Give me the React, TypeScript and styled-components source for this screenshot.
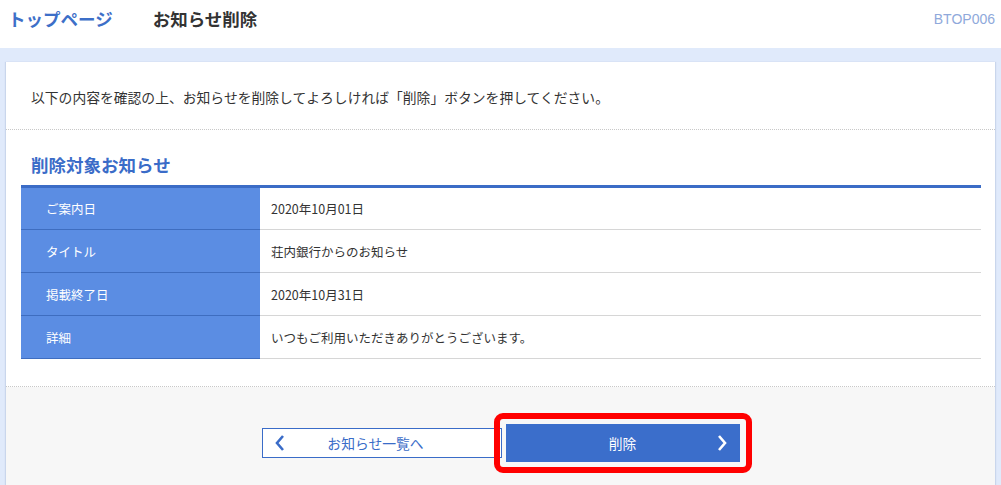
import { createGlobalStyle } from "styled-components";
import styled from "styled-components";

// 削除対象のお知らせ
const rows = [
  { label: "ご案内日", value: "2020年10月01日" },
  { label: "タイトル", value: "荘内銀行からのお知らせ" },
  { label: "掲載終了日", value: "2020年10月31日" },
  { label: "詳細", value: "いつもご利用いただきありがとうございます。" },
];

export default function App() {
  return (
    <>
      <GlobalStyle />
      <Header>
        <Crumbs>
          <TopLink>トップページ</TopLink>
          <PageTitle>お知らせ削除</PageTitle>
        </Crumbs>
        <ScreenId>BTOP006</ScreenId>
      </Header>
      <Band>
        <Card>
          <Intro>
            以下の内容を確認の上、お知らせを削除してよろしければ「削除」ボタンを押してください。
          </Intro>
          <Section>
            <SectionTitle>削除対象お知らせ</SectionTitle>
            <Table>
              <tbody>
                {rows.map((row) => (
                  <tr key={row.label}>
                    <Th>{row.label}</Th>
                    <Td>{row.value}</Td>
                  </tr>
                ))}
              </tbody>
            </Table>
          </Section>
          <Footer>
            <BackButton type="button">
              <Chevron viewBox="0 0 12 20" $left>
                <path d="M9 3 L3 10 L9 17" />
              </Chevron>
              お知らせ一覧へ
            </BackButton>
            <Highlight>
              <DeleteButton type="button">
                削除
                <Chevron viewBox="0 0 12 20">
                  <path d="M3 3 L9 10 L3 17" />
                </Chevron>
              </DeleteButton>
            </Highlight>
          </Footer>
        </Card>
      </Band>
    </>
  );
}

const GlobalStyle = createGlobalStyle`
  body {
    margin: 0;
    background: #e0eafb;
    font-family: "Noto Sans CJK JP", "Noto Sans", sans-serif;
    color: #333;
  }
`;

const Header = styled.header`
  height: 48px;
  box-sizing: border-box;
  padding: 7px 6px 0 8px;
  background: #fff;
  display: flex;
  justify-content: space-between;
  align-items: flex-start;
`;

const Crumbs = styled.div`
  display: flex;
  gap: 40px;
`;

const TopLink = styled.div`
  font-size: 17.5px;
  font-weight: 700;
  line-height: 24px;
  color: #3d6fc8;
`;

const PageTitle = styled.h1`
  margin: 0;
  font-size: 17.5px;
  font-weight: 700;
  line-height: 24px;
  color: #333;
`;

const ScreenId = styled.div`
  font-family: "Liberation Sans", Arial, sans-serif;
  font-size: 14px;
  line-height: 24px;
  color: #8fa9db;
`;

const Band = styled.main`
  padding: 14px 6px 0 6px;
  min-height: 437px;
  box-sizing: border-box;
`;

const Card = styled.div`
  background: #fff;
  box-shadow: -1px 0 1px #c9d6ec, 1px 0 1px #c9d6ec;
`;

const Intro = styled.p`
  margin: 0;
  padding: 25px 25px 22px;
  font-size: 13.8px;
  line-height: 20px;
  border-bottom: 1px dotted #c8c8c8;
`;

const Section = styled.section`
  padding: 23px 14px 27px 15px;
  border-bottom: 1px dotted #c8c8c8;
`;

const SectionTitle = styled.h2`
  margin: 0 0 8px 10px;
  font-size: 17.5px;
  font-weight: 700;
  line-height: 24px;
  color: #3a6cc8;
`;

const Table = styled.table`
  width: 100%;
  border-collapse: collapse;
  border-top: 3px solid #3b6cc6;
  font-size: 12.5px;
`;

const Th = styled.th`
  width: 239px;
  height: 43px;
  padding: 0 0 0 25px;
  box-sizing: border-box;
  text-align: left;
  font-weight: 400;
  color: #fff;
  background: #5b8de3;
  border-bottom: 1px solid #3e6dc0;
`;

const Td = styled.td`
  padding: 0 0 0 11px;
  color: #333;
  border-bottom: 1px solid #d6d6d6;
`;

const Footer = styled.div`
  background: #f7f7f7;
  height: 100px;
  padding-top: 37px;
  box-sizing: border-box;
  display: flex;
  justify-content: center;
  align-items: flex-start;
  gap: 4px;
`;

const BackButton = styled.button`
  position: relative;
  width: 240px;
  height: 30px;
  margin-top: 4px;
  background: #fff;
  border: 1px solid #3a6cc8;
  color: #3a6cc8;
  font-family: inherit;
  font-size: 13.8px;
  padding: 0;
  text-indent: -12px;
`;

const Highlight = styled.div`
  position: relative;
  &::after {
    content: "";
    position: absolute;
    inset: -11px -12px -11px -12px;
    border: 6px solid #ff0000;
    border-radius: 9px;
    pointer-events: none;
  }
`;

const DeleteButton = styled.button`
  position: relative;
  width: 234px;
  height: 38px;
  background: #3b6ecb;
  border: none;
  color: #fff;
  font-family: inherit;
  font-size: 13.8px;
  padding: 0;
`;

const Chevron = styled.svg<{ $left?: boolean }>`
  position: absolute;
  top: 50%;
  width: 12px;
  height: 20px;
  margin-top: -10px;
  ${(p) => (p.$left ? "left: 11px;" : "right: 12px;")}
  fill: none;
  stroke: ${(p) => (p.$left ? "#3a6cc8" : "#fff")};
  stroke-width: 2.6;
`;
